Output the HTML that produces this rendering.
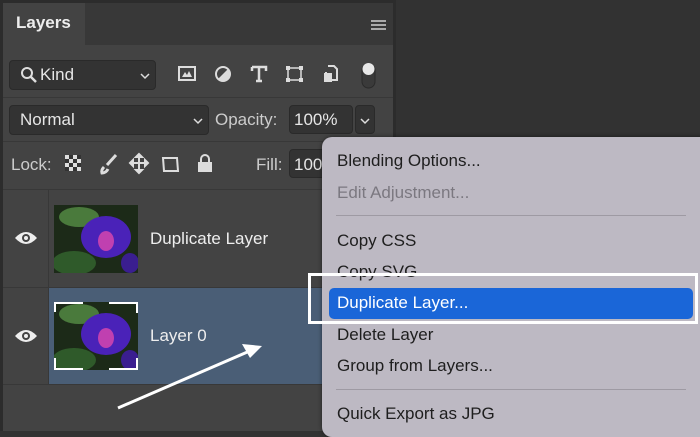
<!DOCTYPE html>
<html><head><style>
*{margin:0;padding:0;box-sizing:border-box}
body{width:700px;height:431px;overflow:hidden;background:#323232;position:relative;font-family:"Liberation Sans",sans-serif;color:#e6e6e6}
.a{position:absolute}
.box{position:absolute;background:#333;border:1px solid #2a2a2a;border-radius:4px}
.mi{position:absolute;left:337px;font-size:17px;color:#1e1e1e}
</style></head><body>
<div class="a" style="left:0;top:0;width:396px;height:431px;background:#2c2c2c"></div>
<div class="a" style="left:3px;top:3px;width:390px;height:428px;background:#434343"></div>
<div class="a" style="left:3px;top:3px;width:390px;height:42px;background:#383838"></div>
<div class="a" style="left:3px;top:3px;width:82px;height:43px;background:#434343"></div>
<div class="a" style="left:16px;top:13px;font-size:17px;font-weight:bold;color:#eee">Layers</div>
<div class="a" style="left:371px;top:20px;width:15px;height:10px;border-top:2px solid #aaa;border-bottom:2px solid #aaa"></div>
<div class="a" style="left:371px;top:24px;width:15px;height:2px;background:#aaa"></div>
<!-- kind -->
<div class="box" style="left:9px;top:60px;width:147px;height:30px"></div>
<svg class="a" style="left:20px;top:66px" width="20" height="20"><circle cx="7" cy="7" r="5" fill="none" stroke="#ddd" stroke-width="2"/><path d="M11 11l5 5" stroke="#ddd" stroke-width="2.5"/></svg>
<div class="a" style="left:40px;top:65px;font-size:17px">Kind</div>
<svg class="a" style="left:140px;top:72px" width="10" height="8"><path d="M1 2l4 4 4-4" fill="none" stroke="#ddd" stroke-width="1.5"/></svg>
<svg class="a" style="left:170px;top:60px" width="220" height="32" viewBox="0 0 220 32">
<rect x="9" y="7" width="16" height="13" fill="none" stroke="#ddd" stroke-width="2"/><path d="M12 17l3-5 2 3 2-4 3 6z" fill="#ddd"/>
<circle cx="53" cy="14" r="7" fill="none" stroke="#ddd" stroke-width="2"/><path d="M48 19l10-10a7 7 0 0 1-10 10z" fill="#ddd"/>
<path d="M82 7h14v4M89 7v14M86 21h6M82 7v4" fill="none" stroke="#ddd" stroke-width="2.5"/>
<rect x="118" y="8" width="13" height="12" fill="none" stroke="#ddd" stroke-width="1.5"/>
<g fill="#ddd"><rect x="116" y="6" width="4" height="4"/><rect x="129" y="6" width="4" height="4"/><rect x="116" y="18" width="4" height="4"/><rect x="129" y="18" width="4" height="4"/></g>
<path d="M158 6h6l3 3v11h-11v-8" fill="none" stroke="#ddd" stroke-width="2"/><rect x="154" y="13" width="8" height="9" fill="#ddd"/>
<rect x="192" y="4" width="13" height="24" rx="6.5" fill="#3a3a3a" stroke="#2a2a2a"/><circle cx="198.5" cy="9" r="6" fill="#e8e8e8"/>
</svg>
<div class="a" style="left:3px;top:97px;width:390px;height:1px;background:#383838"></div>
<!-- normal -->
<div class="box" style="left:9px;top:105px;width:200px;height:30px"></div>
<div class="a" style="left:20px;top:110px;font-size:17px">Normal</div>
<svg class="a" style="left:193px;top:117px" width="10" height="8"><path d="M1 2l4 4 4-4" fill="none" stroke="#ddd" stroke-width="1.5"/></svg>
<div class="a" style="left:215px;top:110px;font-size:17px;color:#ccc">Opacity:</div>
<div class="box" style="left:289px;top:105px;width:64px;height:29px"></div>
<div class="a" style="left:294px;top:110px;font-size:17px">100%</div>
<div class="box" style="left:355px;top:105px;width:20px;height:29px"></div>
<svg class="a" style="left:360px;top:117px" width="10" height="8"><path d="M1 2l4 4 4-4" fill="none" stroke="#ddd" stroke-width="1.5"/></svg>
<div class="a" style="left:3px;top:141px;width:390px;height:1px;background:#383838"></div>
<!-- lock -->
<div class="a" style="left:11px;top:155px;font-size:17px;color:#ccc">Lock:</div>
<svg class="a" style="left:62px;top:150px" width="160" height="28">
<rect x="3" y="5" width="16" height="16" fill="#ddd"/><g fill="#333"><rect x="7" y="5" width="4" height="4"/><rect x="15" y="5" width="4" height="4"/><rect x="3" y="9" width="4" height="4"/><rect x="11" y="9" width="4" height="4"/><rect x="7" y="13" width="4" height="4"/><rect x="15" y="13" width="4" height="4"/><rect x="3" y="17" width="4" height="4"/><rect x="11" y="17" width="4" height="4"/></g>
<path d="M54 5l-9 10M42 17q-3 3-2 6 4 0 6-4" stroke="#ddd" stroke-width="3" fill="none"/>
<path d="M77 5v17M69 13h17M77 4l-3 3h6zM77 23l-3-3h6zM68 13l3-3v6zM86 13l-3-3v6z" stroke="#ddd" stroke-width="2" fill="#ddd"/>
<path d="M101 8h14l1 13h-14z" fill="none" stroke="#ddd" stroke-width="2"/>
<rect x="136" y="12" width="14" height="10" fill="#ddd"/><path d="M139 12v-3a4 4 0 0 1 8 0v3" fill="none" stroke="#ddd" stroke-width="2"/>
</svg>
<div class="a" style="left:256px;top:155px;font-size:17px;color:#ccc">Fill:</div>
<div class="box" style="left:289px;top:149px;width:60px;height:29px"></div>
<div class="a" style="left:294px;top:155px;font-size:17px">100</div>
<div class="a" style="left:3px;top:189px;width:390px;height:1px;background:#383838"></div>
<!-- rows -->
<div class="a" style="left:48px;top:190px;width:1px;height:194px;background:#383838"></div>
<div class="a" style="left:3px;top:287px;width:390px;height:1px;background:#383838"></div>
<div class="a" style="left:49px;top:288px;width:344px;height:96px;background:#4a5e76"></div>
<div class="a" style="left:3px;top:384px;width:390px;height:1px;background:#383838"></div>
<svg class="a" style="left:14px;top:228px" width="24" height="20"><path d="M1 10q11-12 22 0q-11 12-22 0z" fill="#eee"/><circle cx="12" cy="10" r="4" fill="#434343"/><circle cx="12" cy="10" r="2" fill="#eee"/></svg>
<svg class="a" style="left:14px;top:326px" width="24" height="20"><path d="M1 10q11-12 22 0q-11 12-22 0z" fill="#eee"/><circle cx="12" cy="10" r="4" fill="#434343"/><circle cx="12" cy="10" r="2" fill="#eee"/></svg>
<svg class="a" style="left:54px;top:205px" width="84" height="68"><rect width="84" height="68" fill="#1c2a18"/><ellipse cx="25" cy="12" rx="20" ry="10" fill="#4a7a3c"/><ellipse cx="20" cy="58" rx="22" ry="12" fill="#2f5a2a"/><ellipse cx="52" cy="32" rx="25" ry="21" fill="#4a22b8"/><ellipse cx="52" cy="36" rx="8" ry="10" fill="#c040b0"/><ellipse cx="76" cy="58" rx="9" ry="10" fill="#3a1e90"/></svg>
<svg class="a" style="left:54px;top:302px" width="84" height="68"><rect width="84" height="68" fill="#1c2a18"/><ellipse cx="25" cy="12" rx="20" ry="10" fill="#4a7a3c"/><ellipse cx="20" cy="58" rx="22" ry="12" fill="#2f5a2a"/><ellipse cx="52" cy="32" rx="25" ry="21" fill="#4a22b8"/><ellipse cx="52" cy="36" rx="8" ry="10" fill="#c040b0"/><ellipse cx="76" cy="58" rx="9" ry="10" fill="#3a1e90"/>
<path d="M1 10V1h28M55 1h28v10M83 56v11H55M29 67H1V56" fill="none" stroke="#fff" stroke-width="2"/></svg>
<div class="a" style="left:150px;top:229px;font-size:17px;color:#eee">Duplicate Layer</div>
<div class="a" style="left:150px;top:326px;font-size:17px;color:#eee">Layer 0</div>
<svg class="a" style="left:0;top:0" width="330" height="431"><path d="M118 408L252 350" stroke="#fff" stroke-width="3"/><path d="M262 346L242 344L250 358z" fill="#fff"/></svg>
<!-- menu -->
<div class="a" style="left:322px;top:137px;width:390px;height:300px;background:#bdb9c3;border-radius:10px;box-shadow:0 0 4px rgba(0,0,0,.5)"></div>
<div class="mi" style="top:151px">Blending Options...</div>
<div class="mi" style="top:183px;color:#7b7880">Edit Adjustment...</div>
<div class="a" style="left:336px;top:215px;width:350px;height:1px;background:#9e9aa3"></div>
<div class="mi" style="top:231px">Copy CSS</div>
<div class="mi" style="top:262px">Copy SVG</div>
<div class="a" style="left:308px;top:273px;width:390px;height:51px;border:3px solid #fff"></div>
<div class="a" style="left:329px;top:288px;width:364px;height:31px;background:#1a66d8;border-radius:5px"></div>
<div class="mi" style="top:293px;color:#fff">Duplicate Layer...</div>
<div class="mi" style="top:325px">Delete Layer</div>
<div class="mi" style="top:356px">Group from Layers...</div>
<div class="a" style="left:336px;top:389px;width:350px;height:1px;background:#9e9aa3"></div>
<div class="mi" style="top:404px">Quick Export as JPG</div>
</body></html>
